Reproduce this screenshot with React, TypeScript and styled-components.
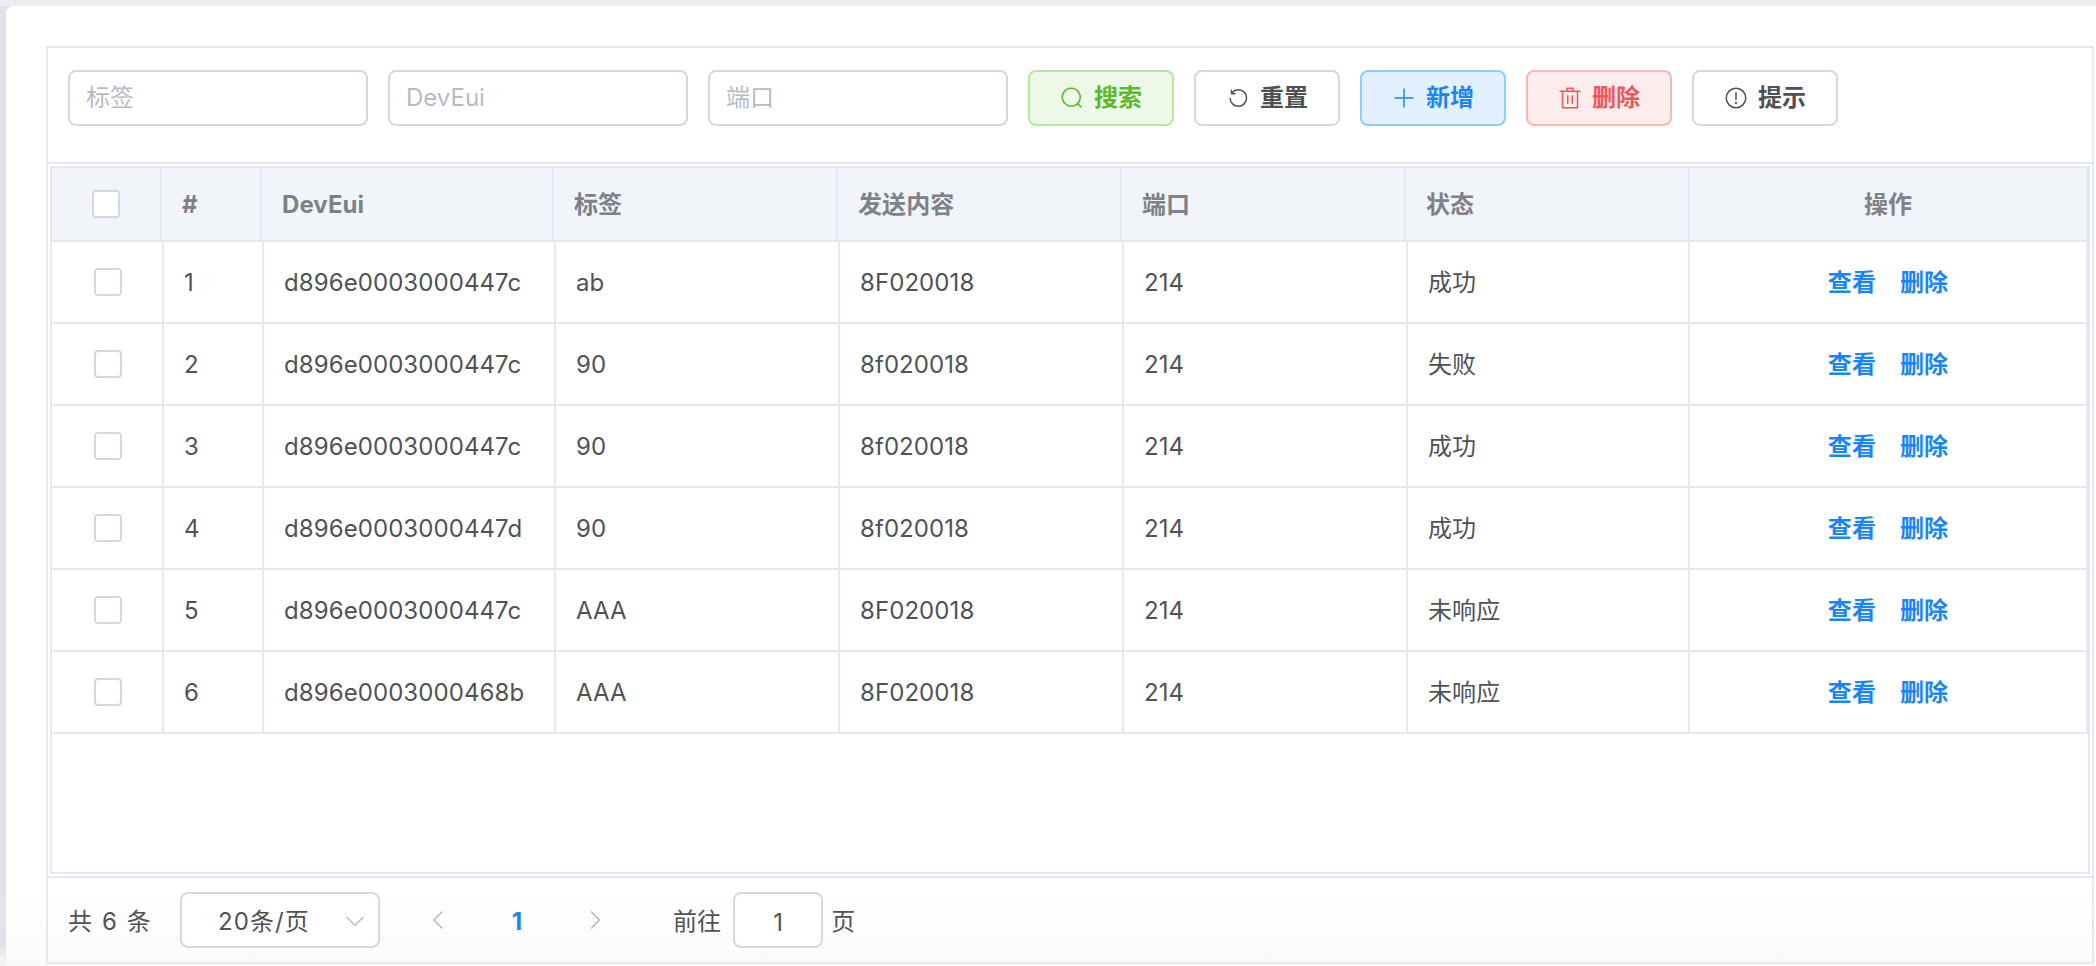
import React from 'react';
import styled, { createGlobalStyle, css } from 'styled-components';

const GlobalStyle = createGlobalStyle`
  html, body {
    margin: 0;
    padding: 0;
    background: #fff;
  }
  body {
    font-family: Inter, "Noto Sans CJK SC", sans-serif;
    font-size: 24px;
    line-height: 32px;
    letter-spacing: 0.08px;
    color: #505257;
  }
  * {
    box-sizing: border-box;
  }
`;

const Page = styled.div`
  width: 2096px;
  height: 966px;
  display: flex;
  flex-direction: column;
  overflow: hidden;
`;

const TopStrip = styled.div`
  height: 6px;
  flex-shrink: 0;
  background: #ebeef2;
`;

const Main = styled.div`
  flex: 1;
  display: flex;
  padding-left: 6px;
  background: linear-gradient(180deg, #e0e3e7 0, #e0e3e7 940px, #f1f2f3 952px);
`;

const Card = styled.div`
  flex: 1;
  padding: 40px 2px 2px 40px;
  border-top-left-radius: 8px;
  background: linear-gradient(180deg, #fff 0, #fff 880px, #fafafa 960px);
`;

const Panel = styled.div`
  height: 100%;
  display: flex;
  flex-direction: column;
  border: 2px solid #e5e8f2;
`;

const Toolbar = styled.div`
  height: 116px;
  flex-shrink: 0;
  display: flex;
  align-items: flex-start;
  gap: 20px;
  padding: 22px 20px 0;
  background: #fff;
  border-bottom: 2px solid #e5e8f2;
`;

const SearchInput = styled.input`
  width: 300px;
  height: 56px;
  padding: 0 16px 2px;
  border: 2px solid #d5d8e3;
  border-radius: 8px;
  outline: none;
  background: #fff;
  font: inherit;
  color: #505257;

  &::placeholder {
    color: #b7bac8;
    opacity: 1;
  }
`;

type Tone = 'green' | 'plain' | 'blue' | 'red';

const toneStyles = {
  green: css`
    color: #5bb92b;
    background: #edf8e6;
    border-color: #b6e7a1;
  `,
  plain: css`
    color: #505154;
    background: #fff;
    border-color: #d5d8e3;
  `,
  blue: css`
    color: #1a85f8;
    background: #e1f1ff;
    border-color: #90cdff;
  `,
  red: css`
    color: #f5535a;
    background: #fdeded;
    border-color: #fdb6b6;
  `,
};

const Button = styled.button<{ $tone: Tone }>`
  width: 146px;
  height: 56px;
  display: flex;
  align-items: center;
  justify-content: center;
  gap: 10px;
  padding: 0;
  border: 2px solid;
  border-radius: 8px;
  font: inherit;
  font-weight: 700;
  ${(props) => toneStyles[props.$tone]}
`;

const TableWrap = styled.div`
  flex: 1;
  margin: 2px 2px 2px;
  border: 2px solid #e5e8f2;
  background: #fff;
`;

const HeaderRow = styled.div`
  display: grid;
  grid-template-columns: 110px 100px 292px 284px 284px 284px 284px 398px;
  height: 74px;
  background: #f1f4f9;
`;

const BodyRow = styled.div`
  display: grid;
  grid-template-columns: 112px 100px 292px 284px 284px 284px 282px 398px;
  height: 82px;
`;

const Cell = styled.div<{ $center?: boolean }>`
  display: flex;
  align-items: center;
  justify-content: ${(props) => (props.$center ? 'center' : 'flex-start')};
  padding: 2px 20px 0;
  border-right: 2px solid #e5e8f2;
  border-bottom: 2px solid #e5e8f2;
  white-space: nowrap;
`;

const HeadCell = styled(Cell)`
  font-weight: 700;
  color: #7e8187;
`;

const CheckCell = styled(Cell)`
  justify-content: center;
  padding: 0;
`;

const BodyCheckCell = styled(CheckCell)`
  padding-left: 2px;
`;

const Checkbox = styled.span`
  width: 28px;
  height: 28px;
  border: 2px solid #d5d8e3;
  border-radius: 4px;
  background: #fff;
`;

const ActionLink = styled.a`
  color: #1a85f8;
  font-weight: 700;
  text-decoration: none;

  & + & {
    margin-left: 24px;
  }
`;

const Footer = styled.div`
  height: 86px;
  flex-shrink: 0;
  display: flex;
  align-items: flex-start;
  padding: 14px 0 0 20px;
  border-top: 2px solid #e5e8f2;
`;

const FooterText = styled.span`
  height: 56px;
  display: flex;
  align-items: center;
  padding-top: 4px;
  white-space: nowrap;
`;

const Total = styled(FooterText)`
  width: 112px;
  word-spacing: 3px;
`;

const PageSize = styled.div`
  position: relative;
  width: 200px;
  height: 56px;
  display: flex;
  align-items: center;
  padding: 4px 0 0 36px;
  border: 2px solid #d5d8e3;
  border-radius: 8px;
  background: #fff;
  letter-spacing: 1.1px;
`;

const SelectArrow = styled.span`
  position: absolute;
  right: 11px;
  top: 15px;
  display: flex;
  color: #b7bac8;
`;

const Pager = styled.div`
  display: flex;
  gap: 24px;
  margin: 0 51px 0 32px;
`;

const PagerItem = styled.span<{ $active?: boolean }>`
  width: 54px;
  height: 56px;
  display: flex;
  align-items: center;
  justify-content: center;
  padding-top: ${(props) => (props.$active ? '3px' : '0')};
  font-weight: 700;
  color: ${(props) => (props.$active ? '#1a85f8' : '#b0b3bd')};
`;

const GotoInput = styled.input`
  width: 90px;
  height: 56px;
  margin: 0 8px 0 12px;
  padding: 4px 0 0;
  border: 2px solid #d5d8e3;
  border-radius: 8px;
  outline: none;
  background: #fff;
  font: inherit;
  color: #505257;
  text-align: center;
`;

const Icon: React.FC<{ d: string }> = ({ d }) => (
  <svg width="24" height="24" viewBox="0 0 1024 1024" fill="currentColor">
    <path d={d} />
  </svg>
);

const icons = {
  search:
    'm795.904 750.72 124.992 124.928a32 32 0 0 1-45.248 45.248L750.656 795.904a416 416 0 1 1 45.248-45.248zM480 832a352 352 0 1 0 0-704 352 352 0 0 0 0 704z',
  refresh:
    'M289.088 296.704h92.992a32 32 0 0 1 0 64H232.96a32 32 0 0 1-32-32V179.712a32 32 0 0 1 64 0v50.56a384 384 0 0 1 643.84 282.88 384 384 0 0 1-383.936 384 384 384 0 0 1-384-384h64a320 320 0 1 0 640 0 320 320 0 0 0-555.712-216.448z',
  plus: 'M480 480V128a32 32 0 0 1 64 0v352h352a32 32 0 0 1 0 64H544v352a32 32 0 1 1-64 0V544H128a32 32 0 0 1 0-64h352z',
  trash:
    'M160 256H96a32 32 0 0 1 0-64h256V95.936a32 32 0 0 1 32-32h256a32 32 0 0 1 32 32V192h256a32 32 0 1 1 0 64h-64v672a32 32 0 0 1-32 32H192a32 32 0 0 1-32-32V256zm448-64v-64H416v64h192zM224 896h576V256H224v640zm192-128a32 32 0 0 1-32-32V416a32 32 0 0 1 64 0v320a32 32 0 0 1-32 32zm192 0a32 32 0 0 1-32-32V416a32 32 0 0 1 64 0v320a32 32 0 0 1-32 32z',
  warning:
    'M512 64a448 448 0 1 1 0 896 448 448 0 0 1 0-896zm0 832a384 384 0 0 0 0-768 384 384 0 0 0 0 768zm48-176a48 48 0 1 1-96 0 48 48 0 0 1 96 0zm-48-464a32 32 0 0 1 32 32v288a32 32 0 0 1-64 0V288a32 32 0 0 1 32-32z',
  left: 'M609.408 149.376 277.76 489.6a32 32 0 0 0 0 44.672l331.648 340.352a29.12 29.12 0 0 0 41.728 0 30.592 30.592 0 0 0 0-42.688L339.264 511.936l311.872-319.872a30.592 30.592 0 0 0 0-42.688 29.12 29.12 0 0 0-41.728 0z',
  right:
    'M340.864 149.312a30.592 30.592 0 0 0 0 42.752L652.736 512 340.864 831.872a30.592 30.592 0 0 0 0 42.752 29.12 29.12 0 0 0 41.728 0L714.24 534.336a32 32 0 0 0 0-44.672L382.592 149.376a29.12 29.12 0 0 0-41.728 0z',
  down: 'M831.872 340.864 512 652.672 192.128 340.864a30.592 30.592 0 0 0-42.752 0 29.12 29.12 0 0 0 0 41.6L489.664 714.24a32 32 0 0 0 44.672 0l340.288-331.712a29.12 29.12 0 0 0 0-41.728 30.592 30.592 0 0 0-42.752 0z',
};

const buttons: { label: string; tone: Tone; icon: string }[] = [
  { label: '搜索', tone: 'green', icon: icons.search },
  { label: '重置', tone: 'plain', icon: icons.refresh },
  { label: '新增', tone: 'blue', icon: icons.plus },
  { label: '删除', tone: 'red', icon: icons.trash },
  { label: '提示', tone: 'plain', icon: icons.warning },
];

const columns = ['#', 'DevEui', '标签', '发送内容', '端口', '状态'];

const rows = [
  { id: 1, devEui: 'd896e0003000447c', tag: 'ab', content: '8F020018', port: '214', status: '成功' },
  { id: 2, devEui: 'd896e0003000447c', tag: '90', content: '8f020018', port: '214', status: '失败' },
  { id: 3, devEui: 'd896e0003000447c', tag: '90', content: '8f020018', port: '214', status: '成功' },
  { id: 4, devEui: 'd896e0003000447d', tag: '90', content: '8f020018', port: '214', status: '成功' },
  { id: 5, devEui: 'd896e0003000447c', tag: 'AAA', content: '8F020018', port: '214', status: '未响应' },
  { id: 6, devEui: 'd896e0003000468b', tag: 'AAA', content: '8F020018', port: '214', status: '未响应' },
];

const App: React.FC = () => {
  return (
    <Page>
      <GlobalStyle />
      <TopStrip />
      <Main>
        <Card>
          <Panel>
            <Toolbar>
              <SearchInput placeholder="标签" />
              <SearchInput placeholder="DevEui" />
              <SearchInput placeholder="端口" />
              {buttons.map((b) => (
                <Button key={b.label} $tone={b.tone}>
                  <Icon d={b.icon} />
                  {b.label}
                </Button>
              ))}
            </Toolbar>

            <TableWrap>
              <HeaderRow>
                <CheckCell>
                  <Checkbox />
                </CheckCell>
                {columns.map((c) => (
                  <HeadCell key={c}>{c}</HeadCell>
                ))}
                <HeadCell $center>操作</HeadCell>
              </HeaderRow>
              {rows.map((r) => (
                <BodyRow key={r.id}>
                  <BodyCheckCell>
                    <Checkbox />
                  </BodyCheckCell>
                  <Cell>{r.id}</Cell>
                  <Cell>{r.devEui}</Cell>
                  <Cell>{r.tag}</Cell>
                  <Cell>{r.content}</Cell>
                  <Cell>{r.port}</Cell>
                  <Cell>{r.status}</Cell>
                  <Cell $center>
                    <ActionLink>查看</ActionLink>
                    <ActionLink>删除</ActionLink>
                  </Cell>
                </BodyRow>
              ))}
            </TableWrap>

            <Footer>
              <Total>共 6 条</Total>
              <PageSize>
                20条/页
                <SelectArrow>
                  <Icon d={icons.down} />
                </SelectArrow>
              </PageSize>
              <Pager>
                <PagerItem>
                  <Icon d={icons.left} />
                </PagerItem>
                <PagerItem $active>1</PagerItem>
                <PagerItem>
                  <Icon d={icons.right} />
                </PagerItem>
              </Pager>
              <FooterText>前往</FooterText>
              <GotoInput defaultValue="1" />
              <FooterText>页</FooterText>
            </Footer>
          </Panel>
        </Card>
      </Main>
    </Page>
  );
};

export default App;
